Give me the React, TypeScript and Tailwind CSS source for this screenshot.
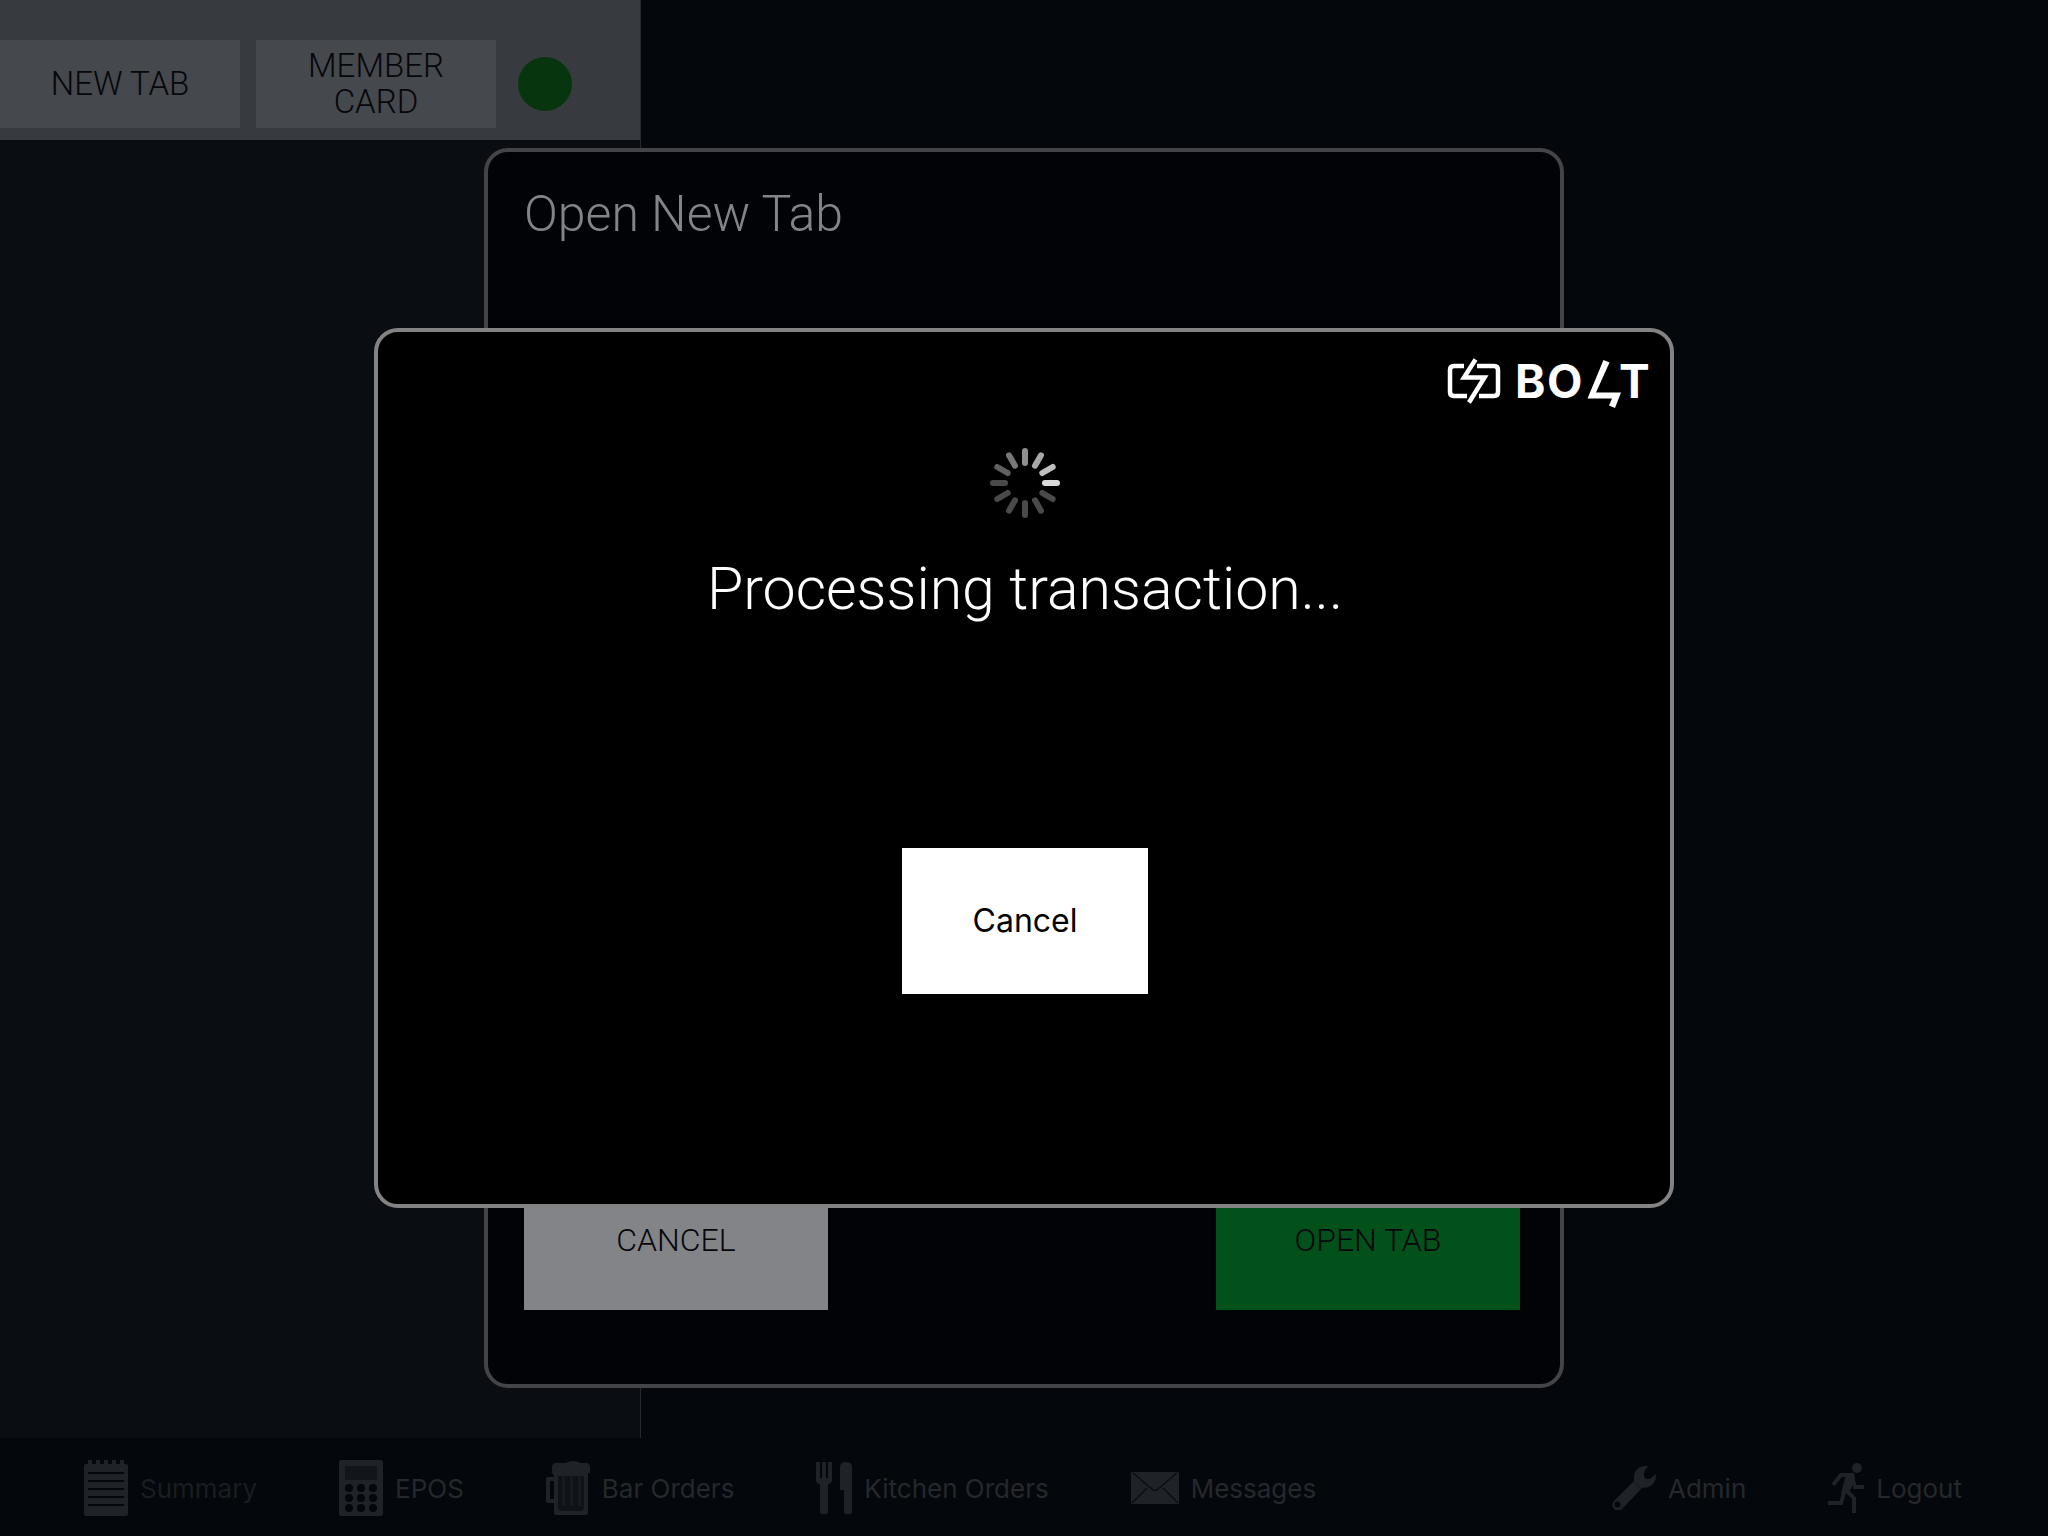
import type { ReactNode } from "react";

const SPOKES = [
  "#8f8f8f",
  "#a8a8a8",
  "#bfbfbf",
  "#d9d9d9",
  "#4a4a4a",
  "#4a4a4a",
  "#4a4a4a",
  "#4a4a4a",
  "#4a4a4a",
  "#4a4a4a",
  "#606060",
  "#787878",
];

function Spinner() {
  return (
    <svg viewBox="-35 -35 70 70" className="size-[70px]" role="status" aria-label="Loading">
      {SPOKES.map((color, i) => (
        <rect key={i} x="-3" y="-35" width="6" height="18" rx="3" fill={color} transform={`rotate(${i * 30})`} />
      ))}
    </svg>
  );
}

function BoltLogo() {
  return (
    <svg viewBox="0 0 200 52" className="h-[52px] w-[200px] overflow-visible" role="img" aria-label="Bolt">
      <g fill="none" stroke="#fff" strokeWidth="4.500">
        <path d="M16 8H6Q2 8 2 12V34Q2 38 6 38H19" />
        <path d="M29 8H46Q50 8 50 12V34Q50 38 46 38H31" />
        <path d="M27.500 1.500L16 19.500H36.500L21 44.500" />
      </g>
      <g fill="#fff" fontFamily="Inter, sans-serif" fontWeight="700" fontSize="46">
        <text x="67" y="40">B</text>
        <text x="99" y="40">O</text>
        <text x="171" y="40">T</text>
      </g>
      <path d="M155.500 2L161.500 4.500L148 34.500H173L167 50L161 47.500L164 40.500H139.500Z" fill="#fff" />
    </svg>
  );
}

function NotepadIcon() {
  return (
    <svg viewBox="0 0 44 56" className="h-14 w-11" fill="#1f2226">
      <path d="M4 0h4v4h4V0h4v4h4V0h4v4h4V0h4v4h4V0h4v4h2a2 2 0 0 1 2 2v48a2 2 0 0 1-2 2H2a2 2 0 0 1-2-2V6a2 2 0 0 1 2-2h2z" />
      <path d="M4 13h36M4 21h36M4 29h36M4 37h36M4 45h36" stroke="#04070b" strokeWidth="2" />
    </svg>
  );
}

function CalculatorIcon() {
  return (
    <svg viewBox="0 0 44 56" className="h-14 w-11" fill="#1f2226">
      <rect width="44" height="56" rx="2" />
      <rect x="6" y="6" width="32" height="14" fill="#121519" />
      {[28, 38, 48].map((cy) => [10, 22, 34].map((cx) => <circle key={`${cx}-${cy}`} cx={cx} cy={cy} r="4" fill="#04070b" />))}
    </svg>
  );
}

function BeerIcon() {
  return (
    <svg viewBox="0 0 44 54" className="h-[54px] w-11" fill="#1f2226">
      <path d="M8 16H2a2 2 0 0 0-2 2v22a2 2 0 0 0 2 2h6v-4H4V20h4z" />
      <path d="M8 12h34v40a2 2 0 0 1-2 2H10a2 2 0 0 1-2-2z" />
      <path d="M12 15h26v31a4 4 0 0 1-4 4H16a4 4 0 0 1-4-4z" fill="#0f1216" />
      <path d="M17.500 14v31M25.500 14v31M33.500 14v31" stroke="#1a1d21" strokeWidth="2" />
      <path d="M6 6a4 4 0 0 1 5-4h9q3-2 7-2 5 0 7 2h5a4 4 0 0 1 5 4v6h-7q-2 3-4 2-3 0-4 1t-6-1-7 0-5 0q-2 3-5-2z" />
    </svg>
  );
}

function CutleryIcon() {
  return (
    <svg viewBox="0 0 36 52" className="h-[52px] w-9" fill="#1f2226">
      <path d="M0 0h4v16h2V0h4v16h2V0h4v18q0 4-4 4v28q0 2-2 2H6q-2 0-2-2V22q-4 0-4-4z" />
      <path d="M24 28V5q0-5 6-5t6 5v45q0 2-2 2h-4q-2 0-2-2V28z" />
    </svg>
  );
}

function EnvelopeIcon() {
  return (
    <svg viewBox="0 0 48 32" className="h-8 w-12" fill="#1f2226">
      <rect width="48" height="32" rx="1" />
      <path d="M2 1l19 16q3 3 6 0L46 1M1 31l15-15M47 31L32 16" fill="none" stroke="#0a0d11" strokeWidth="1.500" />
    </svg>
  );
}

function WrenchIcon() {
  return (
    <svg viewBox="0 0 44 44" className="size-11" fill="#1f2226">
      <path d="M36 0C27-1 22 5 22 11v4L2 35a5.500 5.500 0 1 0 8 8L30 22c7 0 14-3 14-13V8l-6 5h-4l-2-3V6z" />
      <path d="M21 14.500L29.500 23" stroke="#13161a" strokeWidth="1" />
      <circle cx="5.500" cy="38.500" r="3" fill="#04070b" />
    </svg>
  );
}

function RunnerIcon() {
  return (
    <svg viewBox="0 0 36 50" className="h-[50px] w-9" fill="none" stroke="#1f2226" strokeWidth="4">
      <circle cx="29" cy="5" r="5" fill="#1f2226" stroke="none" />
      <path d="M5 22l8-10h12" />
      <path d="M15 10h11l1 4-4 12-6 6-4-2 5-18z" fill="#1f2226" stroke="none" />
      <path d="M24 14l3 10h9" />
      <path d="M17 25l-3 12-1 3H0" />
      <path d="M18 27l8 8v15" />
    </svg>
  );
}

function NavItem({ icon, label, active }: { icon: ReactNode; label: string; active?: boolean }) {
  return (
    <a href="#" className={`flex items-center gap-3 ${active ? "text-[#1a1d21]" : "text-[#25282c]"}`}>
      {icon}
      <span>{label}</span>
    </a>
  );
}

export default function App() {
  return (
    <div className="relative flex min-h-screen flex-col bg-[#04070c] font-['Inter',sans-serif]">
      <main className="flex flex-1">
        <aside className="flex w-[641px] flex-col border-r border-[#25282c] bg-[#0a0d11]">
          <div className="flex items-center gap-4 bg-[#373a3e] pt-10 pb-3 font-['Roboto',sans-serif] text-[33px] leading-9 font-light text-[#06070b]">
            <button className="h-[88px] w-60 bg-[#45484c]">NEW TAB</button>
            <button className="h-[88px] w-60 bg-[#45484c] px-10">MEMBER CARD</button>
            <span className="ml-1.5 size-[54px] rounded-full bg-[#06350e]" />
          </div>
        </aside>
      </main>

      <nav className="flex h-[98px] items-center justify-between bg-[#04070b] pt-0.5 pr-[86px] pl-[84px] text-[26px]">
        <div className="flex items-center gap-[82px]">
          <NavItem icon={<NotepadIcon />} label="Summary" active />
          <NavItem icon={<CalculatorIcon />} label="EPOS" />
          <NavItem icon={<BeerIcon />} label="Bar Orders" />
          <NavItem icon={<CutleryIcon />} label="Kitchen Orders" />
          <NavItem icon={<EnvelopeIcon />} label="Messages" />
        </div>
        <div className="flex items-center gap-[82px]">
          <NavItem icon={<WrenchIcon />} label="Admin" />
          <NavItem icon={<RunnerIcon />} label="Logout" />
        </div>
      </nav>

      <div className="absolute inset-0 flex items-center justify-center">
        <section className="flex h-[1240px] w-[1080px] flex-col justify-between rounded-3xl border-4 border-[#434448] bg-[#020307] pt-8 pr-10 pb-[74px] pl-9 font-['Roboto',sans-serif] font-light">
          <h2 className="text-[50px] leading-[60px] text-[#838488]">Open New Tab</h2>
          <div className="flex justify-between text-[32px] text-[#06070b]">
            <button className="h-[140px] w-[304px] bg-[#838488]">CANCEL</button>
            <button className="h-[140px] w-[304px] bg-[#02511b]">OPEN TAB</button>
          </div>
        </section>
      </div>

      <div className="absolute inset-0 flex items-center justify-center">
        <section
          role="dialog"
          aria-label="Processing transaction"
          className="flex h-[880px] w-[1300px] flex-col items-center rounded-3xl border-4 border-[#838383] bg-black pt-[26px] pl-0.5 text-white"
        >
          <div className="mr-[22px] self-end">
            <BoltLogo />
          </div>
          <div className="mt-[38px]">
            <Spinner />
          </div>
          <p className="mt-9 font-['Roboto',sans-serif] text-[59px] leading-[70px] font-light">Processing transaction...</p>
          <button className="mt-[224px] h-[146px] w-[246px] bg-white text-[32px] text-black">Cancel</button>
        </section>
      </div>
    </div>
  );
}
